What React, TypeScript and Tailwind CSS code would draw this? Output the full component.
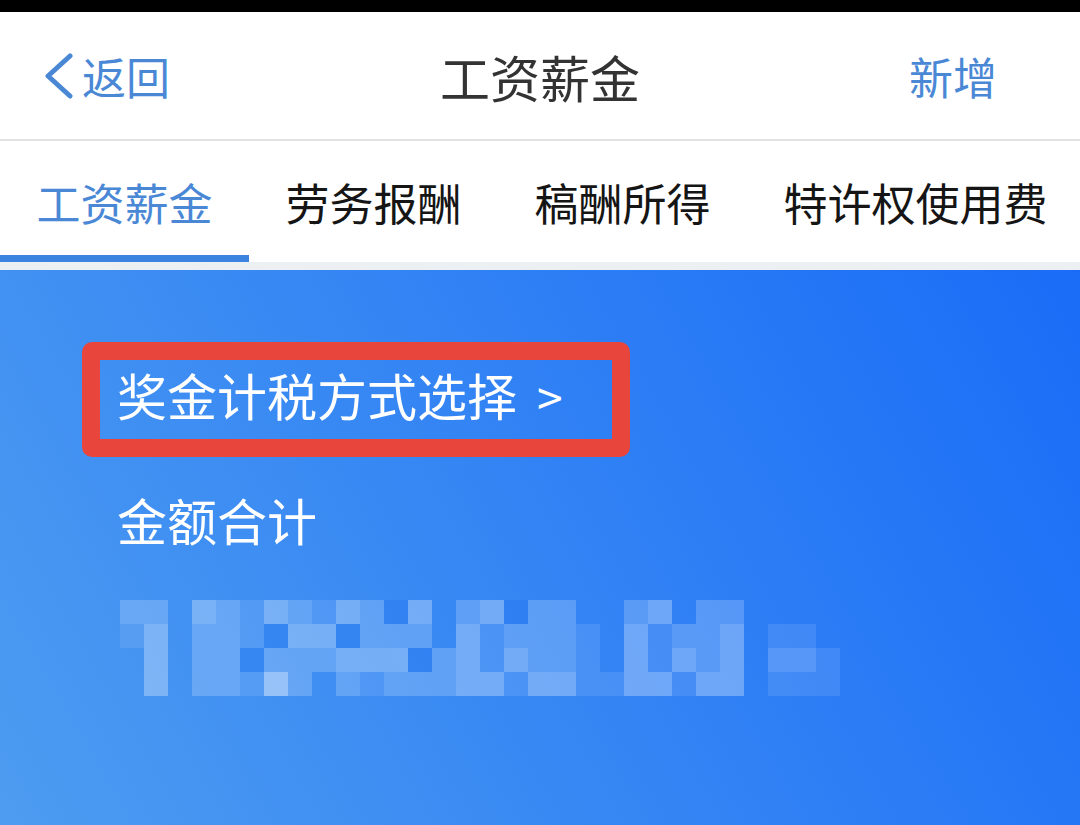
const tabs = ["工资薪金", "劳务报酬", "稿酬所得", "特许权使用费"];

// pixelated amount: 0 = background, 1-4 = lighter, 5 = darker
const mosaic = [
  [2, 2, 0, 3, 2, 1, 3, 2, 1, 3, 2, 5, 3, 0, 2, 3, 5, 2, 2, 0, 0, 2, 3, 0, 2, 2, 0, 0, 0, 0],
  [1, 3, 0, 2, 2, 1, 5, 3, 3, 5, 2, 2, 2, 0, 3, 1, 2, 2, 2, 1, 0, 3, 1, 2, 2, 3, 0, 1, 1, 0],
  [0, 3, 0, 2, 2, 5, 2, 2, 2, 3, 3, 3, 5, 2, 3, 1, 3, 2, 2, 1, 0, 3, 1, 3, 2, 3, 0, 2, 2, 1],
  [0, 3, 0, 2, 2, 1, 4, 2, 0, 2, 1, 2, 2, 2, 3, 3, 1, 3, 3, 1, 1, 3, 3, 1, 3, 3, 0, 1, 1, 1],
];

const shades = [
  "bg-transparent",
  "bg-white/10",
  "bg-white/20",
  "bg-white/30",
  "bg-white/45",
  "bg-[#1c6cf0]/25",
];

export default function App() {
  return (
    <div className="w-[1080px] h-[825px] overflow-hidden flex flex-col bg-white font-['Noto_Sans_CJK_SC','Noto_Sans',sans-serif]">
      <div className="h-[12px] bg-black shrink-0" />

      {/* 顶部导航 */}
      <header className="h-[127px] shrink-0 grid grid-cols-[1fr_auto_1fr] items-center">
        <div className="flex items-center pl-[45px] text-[#4a88d6]">
          <svg width="28" height="46" viewBox="0 0 28 46" fill="none">
            <polyline
              points="25,3 3,23 25,43"
              stroke="currentColor"
              strokeWidth="5"
              strokeLinecap="round"
              strokeLinejoin="round"
            />
          </svg>
          <span className="ml-[9px] text-[44px] leading-none">返回</span>
        </div>
        <h1 className="text-[50px] leading-none text-[#333333]">工资薪金</h1>
        <div className="flex justify-end pr-[83px]">
          <span className="text-[44px] leading-none text-[#4a88d6]">新增</span>
        </div>
      </header>
      <div className="h-[2px] bg-[#e2e2e2] shrink-0" />

      {/* 标签栏 */}
      <nav className="h-[121px] shrink-0 flex overflow-hidden">
        {tabs.map((t, i) => (
          <div
            key={t}
            className={
              i === 0
                ? "relative shrink-0 h-full flex items-center px-[36.5px] text-[44px] leading-none text-[#4a88d6]"
                : "relative shrink-0 h-full flex items-center px-[36.5px] text-[44px] leading-none text-[#151515]"
            }
          >
            {t}
            {i === 0 && (
              <span className="absolute left-0 right-0 bottom-[-3px] h-[10px] bg-[#3d84e0] z-10" />
            )}
          </div>
        ))}
      </nav>
      <div className="h-[8px] shrink-0 bg-[#edf0f3]" />

      {/* 蓝色卡片区 */}
      <main className="flex-1 bg-[linear-gradient(60deg,#4d9cf1,#1a6cf7)] pl-[82px] pt-[72px]">
        <div className="w-[548px] h-[115px] border-[18px] border-[#e8463c] rounded-[10px] flex items-center pl-[17px] pb-[12px]">
          <span className="text-[50px] leading-none text-white whitespace-nowrap">
            奖金计税方式选择<span className="ml-[20px] text-[46px]">&gt;</span>
          </span>
        </div>

        <p className="mt-[37px] pl-[35px] text-[50px] leading-none text-white">金额合计</p>

        <div className="mt-[56px] ml-[38px] grid grid-cols-[repeat(30,24px)] blur-[0.6px]">
          {mosaic.flatMap((row, r) =>
            row.map((v, c) => <div key={r + "-" + c} className={"h-[24px] " + shades[v]} />)
          )}
        </div>
      </main>
    </div>
  );
}
